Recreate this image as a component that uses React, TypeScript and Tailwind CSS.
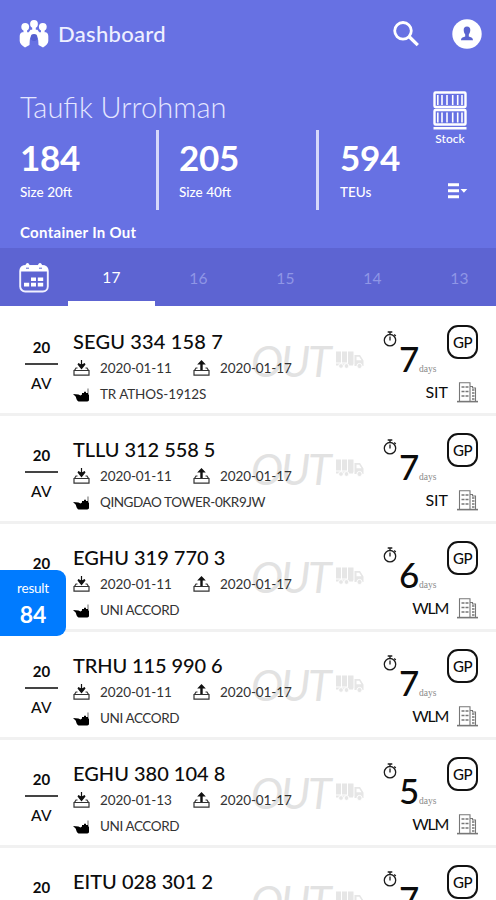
import React from "react";

type Entry = {
  code: string;
  codeStyle: string;
  inDate: string;
  outDate: string;
  ship: string;
  shipStyle: string;
  days: number;
  depot: string;
  depotStyle: string;
};

const entries: Entry[] = [
  { code: "SEGU 334 158 7", codeStyle: "tracking-[0.15px]", inDate: "2020-01-11", outDate: "2020-01-17", ship: "TR ATHOS-1912S", shipStyle: "tracking-[-0.1px]", days: 7, depot: "SIT", depotStyle: "tracking-[0px]" },
  { code: "TLLU 312 558 5", codeStyle: "tracking-[-0.05px]", inDate: "2020-01-11", outDate: "2020-01-17", ship: "QINGDAO TOWER-0KR9JW", shipStyle: "tracking-[-0.43px]", days: 7, depot: "SIT", depotStyle: "tracking-[0px]" },
  { code: "EGHU 319 770 3", codeStyle: "tracking-[0px]", inDate: "2020-01-11", outDate: "2020-01-17", ship: "UNI ACCORD", shipStyle: "tracking-[-0.4px]", days: 6, depot: "WLM", depotStyle: "tracking-[-1.3px]" },
  { code: "TRHU 115 990 6", codeStyle: "tracking-[-0.1px]", inDate: "2020-01-11", outDate: "2020-01-17", ship: "UNI ACCORD", shipStyle: "tracking-[-0.4px]", days: 7, depot: "WLM", depotStyle: "tracking-[-1.3px]" },
  { code: "EGHU 380 104 8", codeStyle: "tracking-[0px]", inDate: "2020-01-13", outDate: "2020-01-17", ship: "UNI ACCORD", shipStyle: "tracking-[-0.4px]", days: 5, depot: "WLM", depotStyle: "tracking-[-1.3px]" },
  { code: "EITU 028 301 2", codeStyle: "tracking-[0px]", inDate: "2020-01-11", outDate: "2020-01-17", ship: "UNI ACCORD", shipStyle: "tracking-[-0.4px]", days: 7, depot: "WLM", depotStyle: "tracking-[-1.3px]" },
];

function PeopleIcon() {
  return (
    <svg width="30" height="29" viewBox="0 0 30 29" fill="#fff">
      <circle cx="6.200" cy="6.800" r="3.900" />
      <circle cx="15" cy="4" r="3.900" />
      <circle cx="23.800" cy="6.800" r="3.900" />
      <path d="M4.500 10h3.600v3H4.500zM13.200 6h3.600v5h-3.600zM22 10h3.600v3H22z" />
      <path d="M3 12.300h6.800l1.700-2.500h7l1.700 2.500H27c1.600.8 2.300 2 2.300 4v4.700c0 2.500-2.300 4.500-5.300 6.500l-4.500-2.500-.3-5c0-2.500-1.800-4.200-4.200-4.200s-4.200 1.700-4.200 4.200l-.3 5L6 27.500c-3-2-5.300-4-5.300-6.500v-4.700c0-2 .7-3.200 2.300-4z" />
      <circle cx="15" cy="17.500" r="3.400" fill="#555fd0" />
    </svg>
  );
}

function SearchIcon() {
  return (
    <svg width="26" height="26" viewBox="0 0 26 26" fill="none" stroke="#fff" strokeWidth="2.800">
      <circle cx="10" cy="9.800" r="8.300" />
      <path d="M16 15.500l8.800 8.600" strokeWidth="3.300" />
    </svg>
  );
}

function UserIcon() {
  return (
    <svg width="30" height="30" viewBox="0 0 30 30">
      <circle cx="15" cy="15" r="14.700" fill="#fff" />
      <path d="M15 7.500c2.300 0 3.300 1.300 3.300 3.600 0 2-.7 3.200-1.500 4.300v2c1.500.6 4.200.9 4.200 3.900H9c0-3 2.700-3.300 4.200-3.900v-2c-.8-1.100-1.500-2.300-1.500-4.300 0-2.300 1-3.600 3.300-3.600z" fill="#5a63cf" />
    </svg>
  );
}

function StockIcon() {
  return (
    <svg width="34" height="39" viewBox="0 0 34 39" fill="none" stroke="#fff" className="shrink-0">
      <rect x="1.500" y="1.500" width="31" height="14.500" rx="1" strokeWidth="2.400" />
      <rect x="1.500" y="19" width="31" height="14.500" rx="1" strokeWidth="2.400" />
      <path d="M4.800 4v10M9 4v10M14 4v10M19.700 4v10M24.700 4v10M29 4v10" strokeWidth="1.600" />
      <path d="M4.800 21.500v10M9 21.500v10M14 21.500v10M19.700 21.500v10M24.700 21.500v10M29 21.500v10" strokeWidth="1.600" />
      <path d="M0.500 37.300h33" strokeWidth="2.600" />
    </svg>
  );
}

function SortIcon() {
  return (
    <svg width="20" height="16" viewBox="0 0 20 16" fill="#fff">
      <path d="M0 0.300h11v3H0zM0 6.300h11v3H0zM0 12.300h11v3H0zM12.500 6h6.800l-3.400 3.800z" />
    </svg>
  );
}

function CalendarIcon() {
  return (
    <svg width="30" height="31" viewBox="0 0 30 31">
      <rect x="1.200" y="4" width="27.600" height="25.500" rx="5" fill="none" stroke="#f1f1ff" strokeWidth="1.900" />
      <path d="M1 9.500V8c0-3 2-4.500 4.500-4.500h1C6.500 0 10.500 0 10.500 3.500h8.500c0-3.500 4-3.500 4 0h1.500C27 3.500 29 5 29 8v1.500z" fill="#fff" />
      <path d="M7 6.200h3M20 6.200h3" stroke="#5d64d2" strokeWidth="1" />
      <path d="M12 15.500h5v3.500h-5zM18.800 15.500h5.400v3.500h-5.400zM5 20.800h5.200v3.700H5zM12 20.800h5v3.700h-5zM18.800 20.800h5.400v3.700h-5.400z" fill="#fff" />
    </svg>
  );
}

function GateIcon({ out }: { out?: boolean }) {
  return (
    <svg width="17" height="16" viewBox="0 0 17 16" className="shrink-0">
      <path d="M4.500 8H3L1.500 10.500h14L14 8h-1.500M1 10.500h15v4.700H1z" fill="none" stroke="#333" strokeWidth="1.200" />
      {out ? (
        <path d="M8.500 0l4.300 4.500H9.700V10H7.300V4.500H4.200z" fill="#111" />
      ) : (
        <path d="M7.900 0h1.200v4.300l2.600-1.300.8 1.500-4 5-4-5 .8-1.500 2.600 1.300z" fill="#111" />
      )}
    </svg>
  );
}

function ShipIcon() {
  return (
    <svg width="17" height="15" viewBox="0 0 17 15" fill="#000">
      <path d="M0 7l5.500.5 2 .9 1.500-.8V6h2V4.800h2V6h1.700V1.500h.6v5.800l.7.700v4.700c0 1-.7 1.700-1.700 1.700H5.500C4 14.200 3.300 12 2.800 9.800z" />
    </svg>
  );
}

function TruckIcon() {
  return (
    <svg width="28" height="18" viewBox="0 0 28 18" fill="#e6e6e6">
      <path d="M0 .5h5v11H0zM6 .5h5v11H6zM12 .5h5.500v13H12zM0 12.500h17v2H0z" />
      <path d="M18.500 4h5.500l3.500 5.500v5.500h-9zm2 1.700v3.500h5L23.200 5.700z" fillRule="evenodd" />
      <circle cx="5" cy="15" r="2.400" stroke="#fff" />
      <circle cx="10.500" cy="15" r="2.400" stroke="#fff" />
      <circle cx="23.500" cy="15" r="2.600" stroke="#fff" />
    </svg>
  );
}

function TimerIcon() {
  return (
    <svg width="14" height="16" viewBox="0 0 14 16" fill="none" stroke="#1c1c1c" strokeWidth="1.300">
      <circle cx="7" cy="9.200" r="5.700" />
      <path d="M7 5.500v4M4.700 1h4.600M7 1v2.500M11.200 3.500l1.600 1.400" />
    </svg>
  );
}

function BuildingIcon() {
  return (
    <svg width="21" height="22" viewBox="0 0 21 22" fill="none" stroke="#777" strokeWidth="1.100">
      <path d="M2.500 20.500V1.800H13v18.700M13 5.500h2.500V7h3v13.500" />
      <path d="M0 20.600h21" strokeWidth="1.600" />
      <path d="M4.500 6h7M4.500 10.500h7M4.500 15h7" strokeDasharray="3 1" strokeWidth="1.400" />
      <path d="M15 9h2.500M15 12h2.500M15 15h2.500M15 18h2.500" strokeWidth="1.300" />
    </svg>
  );
}

function Row({ e }: { e: Entry }) {
  return (
    <li className="relative flex h-[108px] shrink-0 border-b-[3px] border-[#f1f1f1] text-[#0c0c0c]">
      <div className="absolute left-[251px] top-[29px] flex items-start text-[#e2e2e2]">
        <span className="w-[85px] text-[43px] italic leading-[48px] tracking-[-2.2px]">OUT</span>
        <span className="mt-[14px]"><TruckIcon /></span>
      </div>

      <div className="ml-[25px] flex w-[33px] flex-col items-center pt-[29px] text-[15.500px] leading-5">
        <span className="text-[15px] font-bold">20</span>
        <span className="mt-[6px] h-[2px] w-full bg-[#444]" />
        <span className="mt-[8px] font-medium tracking-[0.3px]">AV</span>
      </div>

      <div className="relative ml-[15px] w-[250px] pt-[21px]">
        <h3 className={"whitespace-nowrap text-[20px] font-medium leading-6 " + e.codeStyle}>{e.code}</h3>
        <div className="mt-[5px] flex h-5 items-center text-[13.500px] leading-5 text-[#333]">
          <GateIcon />
          <span className="ml-[10px] w-[93px] tracking-[-0.1px]">{e.inDate}</span>
          <GateIcon out />
          <span className="ml-[10px] whitespace-nowrap tracking-[-0.1px]">{e.outDate}</span>
        </div>
        <div className="mt-[6px] flex h-5 items-center text-[13.500px] leading-5 text-[#333]">
          <ShipIcon />
          <span className={"ml-[10px] whitespace-nowrap " + e.shipStyle}>{e.ship}</span>
        </div>
      </div>

      <div className="ml-auto mr-[18px] w-[95px] pt-[17px]">
        <div className="flex h-[50px] items-start">
          <span className="mt-[6px]"><TimerIcon /></span>
          <span className="mt-[15px] ml-[2px] w-[20px] text-[35px] font-medium leading-[36px] tracking-tight">{e.days}</span>
          <span className="mt-[38px] w-[20px] font-['Liberation_Serif',serif] text-[9.500px] leading-3 text-[#888]">days</span>
          <span className="ml-auto flex h-[34px] w-[31px] items-center justify-center rounded-[11px] border-2 border-[#111] text-[15px] font-medium tracking-[-0.5px]">GP</span>
        </div>
        <div className="mt-[6px] flex h-[22px] items-center justify-end text-[16px]">
          <span className={e.depotStyle}>{e.depot}</span>
          <span className="ml-[9px]"><BuildingIcon /></span>
        </div>
      </div>
    </li>
  );
}

function Stat({ value, label }: { value: string; label: string }) {
  return (
    <div>
      <div className="text-[35px] font-bold leading-[36px] tracking-[-0.300px]">{value}</div>
      <div className="mt-[7px] text-[13.500px] font-medium leading-5">{label}</div>
    </div>
  );
}

export default function App() {
  return (
    <div className="relative flex h-[900px] w-[496px] flex-col overflow-hidden bg-white font-[Lato,sans-serif]">
      <header className="h-[248px] shrink-0 bg-[#6771e3] text-white">
        <div className="flex h-[68px] items-center pl-[19px] pr-[14px]">
          <PeopleIcon />
          <h1 className="ml-[9px] text-[22px] font-medium leading-7 tracking-[0.3px] text-[#eeefff]">Dashboard</h1>
          <span className="ml-auto mr-[33px]"><SearchIcon /></span>
          <UserIcon />
        </div>
        <div className="flex h-[62px] justify-between pl-5 pr-[29px]">
          <h2 className="pt-[21px] text-[29px] font-light leading-9 text-[#e4e6ff]">Taufik Urrohman</h2>
          <div className="flex flex-col items-center pt-[23px]">
            <StockIcon />
            <span className="shrink-0 text-[12px] font-medium leading-[18px]">Stock</span>
          </div>
        </div>
        <div className="flex h-[80px] items-stretch">
          <div className="ml-[20px] mt-[9px] w-[136px]"><Stat value="184" label="Size 20ft" /></div>
          <span className="w-[3px] bg-[#d5d8fa]" />
          <div className="ml-[20px] mt-[9px] w-[137px]"><Stat value="205" label="Size 40ft" /></div>
          <span className="w-[3px] bg-[#d5d8fa]" />
          <div className="ml-[21px] mt-[9px] w-[108px]"><Stat value="594" label="TEUs" /></div>
          <span className="mt-[53px]"><SortIcon /></span>
        </div>
        <div className="pl-5 pt-[12px] text-[15px] font-bold leading-5 tracking-[0.3px]">Container In Out</div>
      </header>

      <nav className="flex h-[58px] shrink-0 bg-[#5d64d2] text-[15.500px] tracking-[0.200px]">
        <div className="w-[68px] shrink-0 pl-[19px] pt-[14px]"><CalendarIcon /></div>
        <div className="flex w-[87px] shrink-0 items-center justify-center border-b-[5px] border-white pt-[7px] text-white">17</div>
        {["16", "15", "14", "13"].map((d) => (
          <div key={d} className="flex w-[87px] shrink-0 items-center justify-center pt-[3px] text-[#8f96e6]">{d}</div>
        ))}
      </nav>

      <ul className="flex flex-col pt-[2px]">
        {entries.map((e) => <Row key={e.code} e={e} />)}
      </ul>

      <div className="absolute left-0 top-[570px] flex h-[66px] w-[66px] flex-col items-center rounded-r-[9px] bg-[#007bff] pt-[8px] text-white">
        <span className="text-[13.500px] leading-5 tracking-[-0.2px]">result</span>
        <span className="mt-[4px] text-[23px] font-bold leading-6">84</span>
      </div>
    </div>
  );
}
